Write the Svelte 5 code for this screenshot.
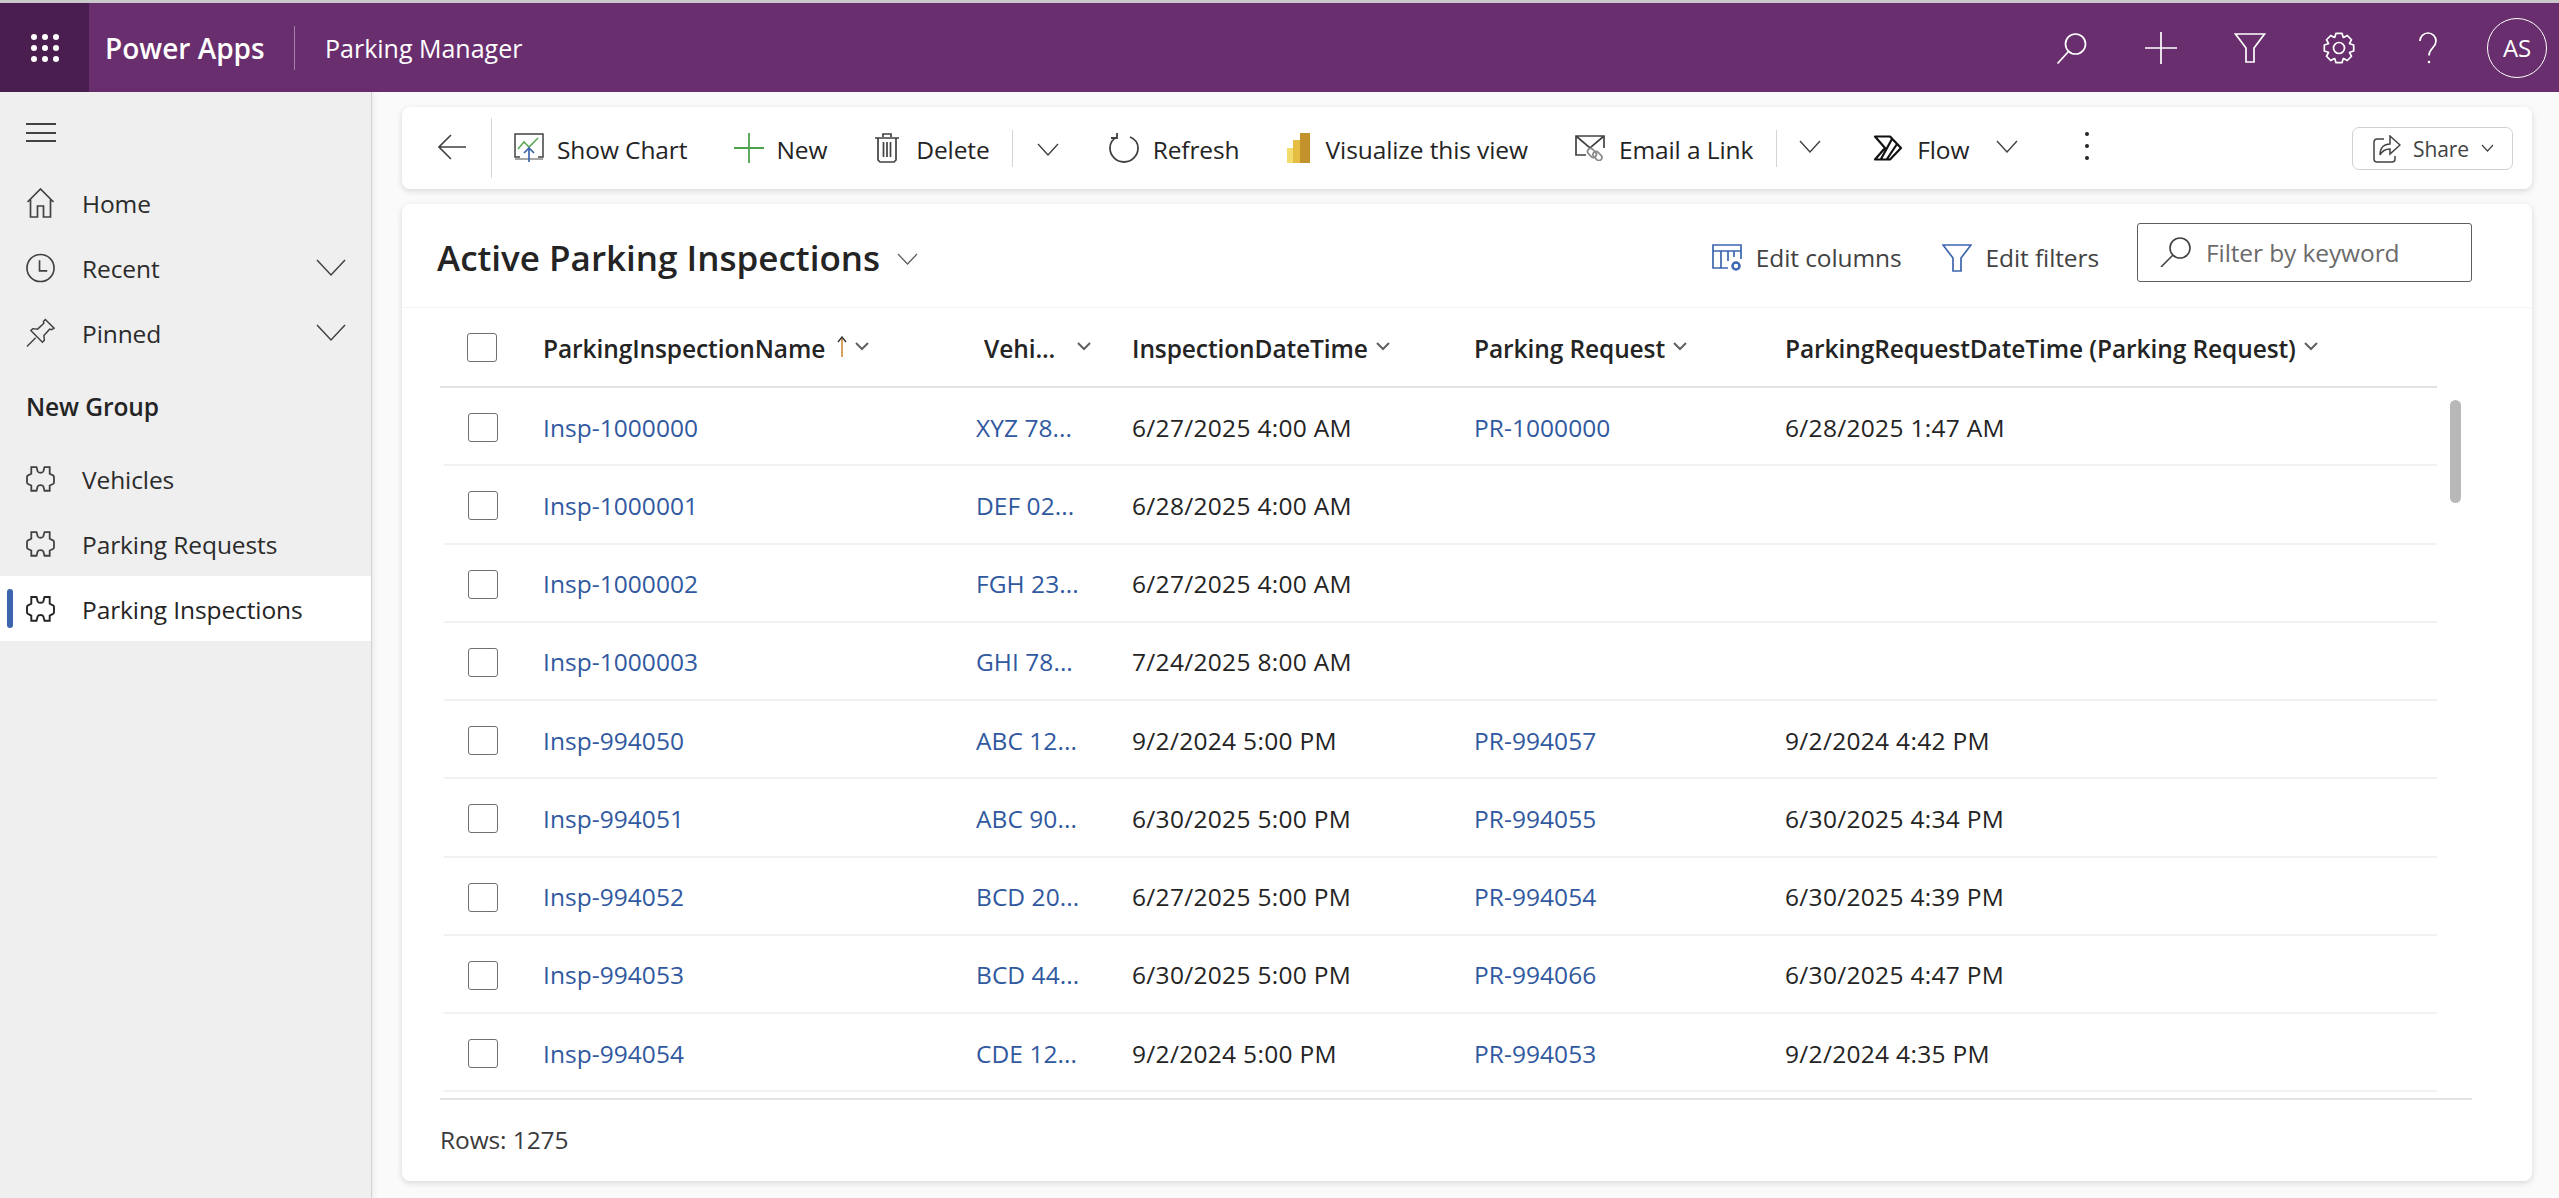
<script>
  const rows = [
    ['Insp-1000000','XYZ 78...','6/27/2025 4:00 AM','PR-1000000','6/28/2025 1:47 AM'],
    ['Insp-1000001','DEF 02...','6/28/2025 4:00 AM','',''],
    ['Insp-1000002','FGH 23...','6/27/2025 4:00 AM','',''],
    ['Insp-1000003','GHI 78...','7/24/2025 8:00 AM','',''],
    ['Insp-994050','ABC 12...','9/2/2024 5:00 PM','PR-994057','9/2/2024 4:42 PM'],
    ['Insp-994051','ABC 90...','6/30/2025 5:00 PM','PR-994055','6/30/2025 4:34 PM'],
    ['Insp-994052','BCD 20...','6/27/2025 5:00 PM','PR-994054','6/30/2025 4:39 PM'],
    ['Insp-994053','BCD 44...','6/30/2025 5:00 PM','PR-994066','6/30/2025 4:47 PM'],
    ['Insp-994054','CDE 12...','9/2/2024 5:00 PM','PR-994053','9/2/2024 4:35 PM']
  ];
  const puzzle = 'M5.300.8h5.200l1.200 4.500c.6 1.600 5 1.600 5.600 0l1.200-4.500h5.200v6.700l3.300 1.600c.6.3 1 1 1 1.700v5.200c0 .7-.4 1.400-1 1.700l-3.300 1.600v5.200H18.500l-1.200-4.500c-.6-1.600-5-1.600-5.600 0l-1.200 4.500H5.300v-5.200l-3.300-1.600c-.6-.3-1-1-1-1.700v-5.200c0-.7.4-1.400 1-1.700l3.300-1.600z';
  const gear = (() => {
    const pts = [];
    const n = 8, cx = 16, cy = 16, ro = 15, ri = 11.5;
    for (let i = 0; i < n; i++) {
      const a = (i * 2 * Math.PI) / n - Math.PI / 2;
      const step = (2 * Math.PI) / n;
      [[ri, -0.5], [ro, -0.27], [ro, 0.27], [ri, 0.5]].forEach(([r, f]) => {
        const t = a + f * step * 0.95;
        pts.push((cx + r * Math.cos(t)).toFixed(2) + ' ' + (cy + r * Math.sin(t)).toFixed(2));
      });
    }
    return 'M' + pts.join('L') + 'Z';
  })();
</script>

<div class="page">
  <div class="strip"></div>
  <header class="top">
    <div class="waffle">
      <svg width="30" height="30" viewBox="0 0 30 30" fill="#fff">
        {#each [4,15,26] as y}{#each [4,15,26] as x}<circle cx={x} cy={y} r="3"/>{/each}{/each}
      </svg>
    </div>
    <div class="brand">Power Apps</div>
    <div class="brand-sep"></div>
    <div class="appname">Parking Manager</div>
    <div class="top-icons">
      <svg class="ti" viewBox="0 0 32 32" fill="none" stroke="#fff" stroke-width="1.7"><circle cx="19.5" cy="12" r="10"/><path d="M12.5 19.5 1.5 31.5"/></svg>
      <svg class="ti" viewBox="0 0 32 32" fill="none" stroke="#fff" stroke-width="1.7"><path d="M16 0v32M0 16h32"/></svg>
      <svg class="ti" viewBox="0 0 32 32" fill="none" stroke="#fff" stroke-width="1.7"><path d="M1.5 2h29L20 16v14h-8V16z"/></svg>
      <svg class="ti" viewBox="0 0 32 32" fill="none" stroke="#fff" stroke-width="1.7"><circle cx="16" cy="16" r="5.500"/><path d={gear} stroke-linejoin="round"/></svg>
      <svg class="ti" viewBox="0 0 32 32" fill="none" stroke="#fff" stroke-width="1.7"><path d="M8 9c0-4.500 3.500-8 8-8s8 3.500 8 8c0 7-7 7-7 14.500"/><circle cx="17" cy="30" r="1.300" fill="#fff" stroke="none"/></svg>
      <div class="avatar">AS</div>
    </div>
  </header>

  <div class="body">
    <nav class="side">
      <div class="burger"><span></span><span></span><span></span></div>
      <div class="nav">
        <svg class="ni" viewBox="0 0 28 30" fill="none" stroke="#424242" stroke-width="1.7"><path d="M1 14 14 1l13 13M4 11v18h7V18h6v11h7V11"/></svg>
        <span>Home</span>
      </div>
      <div class="nav">
        <svg class="ni" viewBox="0 0 30 30" fill="none" stroke="#424242" stroke-width="1.7"><circle cx="15" cy="15" r="14"/><path d="M14 7v11h8"/></svg>
        <span>Recent</span>
        <svg class="chev" viewBox="0 0 30 18" fill="none" stroke="#424242" stroke-width="1.500"><path d="M1 1l14 15L29 1"/></svg>
      </div>
      <div class="nav">
        <svg class="ni" viewBox="0 0 30 30" fill="none" stroke="#424242" stroke-width="1.500"><path d="M20 1l9 9-2.500 1.500-2-.5-6 6.500.5 5-2 2-12-12 2-2 5 .5 6.500-6-.5-2zM10 20 1 29"/></svg>
        <span>Pinned</span>
        <svg class="chev" viewBox="0 0 30 18" fill="none" stroke="#424242" stroke-width="1.500"><path d="M1 1l14 15L29 1"/></svg>
      </div>
      <div class="group">New Group</div>
      <div class="nav">
        <svg class="ni" viewBox="0 0 29 25.500" fill="none" stroke="#424242" stroke-width="1.800"><path d={puzzle}/></svg>
        <span>Vehicles</span>
      </div>
      <div class="nav">
        <svg class="ni" viewBox="0 0 29 25.500" fill="none" stroke="#424242" stroke-width="1.800"><path d={puzzle}/></svg>
        <span>Parking Requests</span>
      </div>
      <div class="nav sel">
        <i class="bar"></i>
        <svg class="ni" viewBox="0 0 29 25.500" fill="none" stroke="#242424" stroke-width="1.900"><path d={puzzle}/></svg>
        <span>Parking Inspections</span>
      </div>
    </nav>

    <main class="main">
      <div class="card toolbar">
        <button class="tb back">
          <svg width="28" height="26" viewBox="0 0 28 26" fill="none" stroke="#424242" stroke-width="1.600"><path d="M13 1 1 13l12 12M1 13h27"/></svg>
        </button>
        <i class="vsep tall"></i>
        <button class="tb chart">
          <svg width="30" height="30" viewBox="0 0 30 30" fill="none">
            <path d="M6 24H1V1h28v23h-5" stroke="#424242" stroke-width="1.500"/>
            <path d="M1 26h28" stroke="#8a8a8a" stroke-width="1.500"/>
            <path d="M4 16l6-7 5 5 9-9" stroke="#5aa85a" stroke-width="1.600"/>
            <path d="M15 29V15M10 20l5-5 5 5" stroke="#3d65ae" stroke-width="1.700"/>
          </svg>
          <span>Show Chart</span>
        </button>
        <button class="tb new">
          <svg width="30" height="30" viewBox="0 0 30 30" fill="none" stroke="#4ea24e" stroke-width="1.800"><path d="M15 0v30M0 15h30"/></svg>
          <span>New</span>
        </button>
        <button class="tb del">
          <svg width="26" height="30" viewBox="0 0 26 30" fill="none" stroke="#424242" stroke-width="1.700"><path d="M1 5h24M9 4V1h8v3M4 5v22l2 2h14l2-2V5M9.500 9v15M13 9v15M16.500 9v15"/></svg>
          <span>Delete</span>
        </button>
        <i class="vsep s1"></i>
        <svg class="cv c1" viewBox="0 0 22 13" fill="none" stroke="#424242" stroke-width="1.400"><path d="M1 1l10 11L21 1"/></svg>
        <button class="tb refresh">
          <svg width="32" height="30" viewBox="0 0 32 30" fill="none" stroke="#424242" stroke-width="1.800"><path d="M22 4c5 2 8 6 8 11a14 14 0 1 1-28 0C2 10 5 6 9 4M9 0v5H3"/></svg>
          <span>Refresh</span>
        </button>
        <button class="tb viz">
          <svg width="23" height="30" viewBox="0 0 23 30">
            <rect x="0" y="15" width="10" height="15" fill="#f2dc6b"/>
            <rect x="6" y="7" width="10" height="23" fill="#e5bd42"/>
            <rect x="13" y="0" width="10" height="30" fill="#c4922c"/>
          </svg>
          <span>Visualize this view</span>
        </button>
        <button class="tb mail">
          <svg width="30" height="26" viewBox="0 0 30 26" fill="none">
            <path d="M11 20H1V1h28v12M1 1l14 12L29 1" stroke="#424242" stroke-width="1.700"/>
            <g stroke="#8a8a8a" stroke-width="1.700">
              <rect x="12" y="15" width="10" height="6" rx="3" transform="rotate(45 17 18)"/>
              <rect x="17.500" y="18" width="10" height="6" rx="3" transform="rotate(45 22.500 21)"/>
            </g>
          </svg>
          <span>Email a Link</span>
        </button>
        <i class="vsep s2"></i>
        <svg class="cv c2" viewBox="0 0 22 13" fill="none" stroke="#424242" stroke-width="1.400"><path d="M1 1l10 11L21 1"/></svg>
        <button class="tb flow">
          <svg width="30" height="26" viewBox="0 0 30 26" fill="none" stroke="#111" stroke-width="2.200" stroke-linejoin="round"><path d="M2 1.500h15l11 11.500-11 11.500H2l10-11.500zM19 4 8 24M24 9 14 24"/></svg>
          <span>Flow</span>
        </button>
        <svg class="cv c3" viewBox="0 0 22 13" fill="none" stroke="#424242" stroke-width="1.400"><path d="M1 1l10 11L21 1"/></svg>
        <div class="dots"><b></b><b></b><b></b></div>
        <button class="share">
          <svg width="28" height="28" viewBox="0 0 28 28" fill="none" stroke="#424242" stroke-width="1.500"><path d="M11 4H4a3 3 0 0 0-3 3v17a3 3 0 0 0 3 3h15a3 3 0 0 0 3-3v-3"/><path d="M17 1l10 9-10 9v-5c-5 0-8 2-10 6 0-7 4-11 10-11z"/></svg>
          <span>Share</span>
          <svg width="13" height="9" viewBox="0 0 13 9" fill="none" stroke="#424242" stroke-width="1.200"><path d="M1 1l5.500 6L12 1"/></svg>
        </button>
      </div>

      <div class="card grid">
        <div class="titlebar">
          <h1>Active Parking Inspections</h1>
          <svg class="tchev" viewBox="0 0 21 12" fill="none" stroke="#616161" stroke-width="1.300"><path d="M1 1l9.500 10L20 1"/></svg>
          <div class="tools">
            <button class="tool">
              <svg width="30" height="28" viewBox="0 0 30 28" fill="none" stroke="#3d65ae" stroke-width="1.700"><path d="M16 24H1V1h28v14M1 7h28M9 7v17M16 7v10M22 7v6"/><circle cx="24" cy="22" r="3.500" stroke-width="2.500"/></svg>
              <span>Edit columns</span>
            </button>
            <button class="tool">
              <svg width="30" height="28" viewBox="0 0 30 28" fill="none" stroke="#3d65ae" stroke-width="1.700"><path d="M1 1h28L19 14v13h-8V14z"/></svg>
              <span>Edit filters</span>
            </button>
            <div class="search">
              <svg width="32" height="30" viewBox="0 0 32 30" fill="none" stroke="#424242" stroke-width="1.600"><circle cx="20" cy="11" r="10"/><path d="M13 18 1 30"/></svg>
              <span>Filter by keyword</span>
            </div>
          </div>
        </div>

        <div class="table">
          <div class="thead">
            <i class="cb"></i>
            <div class="th c-name">ParkingInspectionName
              <svg class="up" width="10" height="22" viewBox="0 0 10 22" fill="none" stroke-width="1.400"><path d="M5 1v20" stroke="#c87a1e"/><path d="M1 6l4-5 4 5" stroke="#333"/></svg>
              <svg class="hc" viewBox="0 0 14 9" fill="none" stroke="#616161" stroke-width="2"><path d="M1 1l6 6 6-6"/></svg>
            </div>
            <div class="th c-veh">Vehi...
              <svg class="hc far" viewBox="0 0 14 9" fill="none" stroke="#616161" stroke-width="2"><path d="M1 1l6 6 6-6"/></svg>
            </div>
            <div class="th c-date">InspectionDateTime
              <svg class="hc" viewBox="0 0 14 9" fill="none" stroke="#616161" stroke-width="2"><path d="M1 1l6 6 6-6"/></svg>
            </div>
            <div class="th c-pr">Parking Request
              <svg class="hc" viewBox="0 0 14 9" fill="none" stroke="#616161" stroke-width="2"><path d="M1 1l6 6 6-6"/></svg>
            </div>
            <div class="th c-prd">ParkingRequestDateTime (Parking Request)
              <svg class="hc" viewBox="0 0 14 9" fill="none" stroke="#616161" stroke-width="2"><path d="M1 1l6 6 6-6"/></svg>
            </div>
          </div>
          {#each rows as r}
            <div class="row">
              <i class="cb"></i>
              <a class="td c-name">{r[0]}</a>
              <a class="td c-veh">{r[1]}</a>
              <div class="td c-date">{r[2]}</div>
              <a class="td c-pr">{r[3]}</a>
              <div class="td c-prd">{r[4]}</div>
            </div>
          {/each}
          <div class="thumb"></div>
        </div>

        <div class="foot">Rows: 1275</div>
      </div>
    </main>
  </div>
</div>

<style>
  :global(body) { margin: 0; background: #fafafa; }
  .page {
    width: 2559px; height: 1198px; overflow: hidden; display: flex; flex-direction: column;
    font-family: "Open Sans", "Noto Sans", sans-serif; font-size: 24.500px; letter-spacing: -0.1px; color: #242424;
  }
  button { all: unset; box-sizing: border-box; display: flex; align-items: center; font: inherit; letter-spacing: inherit; white-space: nowrap; }
  .strip { height: 3px; background: #c9c9c9; }
  .top { height: 89px; background: #692e6e; display: flex; align-items: center; color: #fff; }
  .waffle { width: 89px; height: 89px; background: #4a1f4f; display: flex; align-items: center; justify-content: center; }
  .brand { margin-left: 16px; font-size: 28px; font-weight: 600; letter-spacing: 0; width: 159px; white-space: nowrap; }
  .brand-sep { width: 1px; height: 44px; background: #a583a8; margin: 0 30px 0 30px; }
  .appname { font-size: 25px; letter-spacing: 0; white-space: nowrap; }
  .top-icons { margin-left: auto; display: flex; align-items: center; gap: 57px; padding-right: 12px; }
  .ti { width: 32px; height: 32px; }
  .avatar { width: 60px; height: 60px; margin-left: -14px; box-sizing: border-box; border: 1.300px solid #fff; border-radius: 50%; display: flex; align-items: center; justify-content: center; font-size: 24px; }

  .body { flex: 1; display: flex; min-height: 0; }
  .side { width: 371px; background: #efefef; border-right: 1px solid #d2d2d2; box-shadow: 2px 0 6px rgba(0,0,0,.07); flex: none; }
  .burger { height: 78px; padding: 31px 0 0 26px; box-sizing: border-box; display: flex; flex-direction: column; gap: 6.500px; }
  .burger span { display: block; width: 30px; height: 2px; background: #424242; }
  .nav { position: relative; height: 65px; display: flex; align-items: center; padding-left: 26px; color: #2b2b2b; }
  .nav span { margin: 1px 0 0 27px; }
  .ni { width: 29px; height: 30px; flex: none; }
  .chev { width: 30px; height: 18px; position: absolute; left: 316px; top: 24px; }
  .group { height: 81px; box-sizing: border-box; padding: 1px 0 0 26px; display: flex; align-items: center; font-weight: 600; }
  .nav.sel { background: #fff; color: #242424; }
  .bar { position: absolute; left: 7px; top: 13px; width: 6px; height: 39px; background: #3d65ae; border-radius: 3px; }

  .main { flex: 1; padding: 15px 27px 17px 30px; display: flex; flex-direction: column; gap: 15px; min-width: 0; }
  .card { background: #fff; border-radius: 8px; box-shadow: 0 2px 6px rgba(0,0,0,.14); }
  .toolbar { height: 82px; display: flex; align-items: center; flex: none; position: relative; }
  .tb { gap: 13px; }
  .tb span { position: relative; top: 1px; }
  .back { margin: -3px 0 0 36px; }
  .vsep { width: 1px; background: #d4d4d4; flex: none; }
  .vsep.tall { height: 60px; margin-left: 25px; }
  .chart { margin-left: 22px; }
  .new { margin-left: 47px; gap: 12px; }
  .del { margin-left: 47px; gap: 16px; }
  .vsep.s1 { height: 37px; margin-left: 22px; }
  .cv { width: 22px; height: 13px; flex: none; }
  .c1 { margin-left: 24px; margin-top: 2px; }
  .refresh { margin-left: 49px; gap: 13px; }
  .viz { margin-left: 47px; gap: 16px; }
  .mail { margin-left: 47px; gap: 14px; }
  .vsep.s2 { height: 37px; margin-left: 23px; }
  .c2 { margin-left: 22px; margin-top: -4px; }
  .flow { margin-left: 52px; gap: 14px; }
  .c3 { margin-left: 27px; margin-top: -4px; }
  .dots { margin-left: 67px; margin-top: -4px; display: flex; flex-direction: column; gap: 8px; }
  .dots b { display: block; width: 4px; height: 4px; border-radius: 50%; background: #242424; }
  .share { position: absolute; right: 19px; top: 20px; height: 43px; width: 161px; border: 1px solid #d1d1d1; border-radius: 7px; padding-left: 20px; gap: 12px; font-size: 21px; color: #424242; }

  .grid { flex: 1; display: flex; flex-direction: column; min-height: 0; }
  .titlebar { height: 104px; box-sizing: border-box; padding-top: 4px; flex: none; border-bottom: 1px solid #f5f5f5; display: flex; align-items: center; padding-left: 35px; position: relative; }
  h1 { margin: 0; font-size: 35px; font-weight: 600; letter-spacing: 0; white-space: nowrap; }
  .tchev { width: 21px; height: 12px; margin-left: 17px; margin-top: 2px; }
  .tools { margin-left: auto; display: flex; align-items: center; margin-right: 60px; }
  .tool { gap: 14px; color: #424242; margin-right: 40px; }
  .search { width: 335px; height: 59px; box-sizing: border-box; border: 1.500px solid #605e5c; border-radius: 3px; display: flex; align-items: center; padding-left: 22px; gap: 14px; color: #6b6b6b; margin: -11px 0 0 -2px; }

  .table { position: relative; flex: 1; min-height: 0; }
  .thead { height: 78px; margin-left: 38px; margin-right: 95px; border-bottom: 2px solid #e3e3e3; display: flex; align-items: center; position: relative; }
  .cb { display: block; position: absolute; width: 30px; height: 29px; box-sizing: border-box; border: 1.300px solid #707070; border-radius: 3px; background: #fff; }
  .thead .cb { left: 27px; top: 25px; }
  .th { position: absolute; top: 24px; font-weight: 600; white-space: nowrap; display: flex; align-items: center; gap: 8px; }
  .thead .c-name { left: 103px; }
  .thead .c-veh { left: 544px; }
  .thead .c-date { left: 692px; }
  .thead .c-pr { left: 1034px; }
  .thead .c-prd { left: 1345px; }
  .up { margin: -4px 0 0 4px; }
  .hc { width: 14px; height: 9px; margin-top: -4px; }
  .hc.far { margin-left: 14px; }
  .row { height: 78.250px; margin-left: 42px; margin-right: 95px; border-bottom: 2px solid #f1f1f1; box-sizing: border-box; position: relative; }
  .row .cb { left: 24px; top: 25px; }
  .td { position: absolute; white-space: nowrap; top: 22.500px; letter-spacing: 0.05px; }
  a.td { color: #31599f; }
  .row .c-name { left: 99px; }
  .row .c-veh { left: 532px; }
  .row .c-date { left: 688px; letter-spacing: .3px; }
  .row .c-pr { left: 1030px; }
  .row .c-prd { left: 1341px; letter-spacing: .3px; }
  .thumb { position: absolute; left: 2048px; top: 92px; width: 11px; height: 103px; border-radius: 6px; background: #b8b8b8; }
  .foot { flex: none; height: 83px; box-sizing: border-box; padding-bottom: 3px; margin: 0 60px 0 38px; border-top: 2px solid #e3e3e3; display: flex; align-items: center; color: #3b3b3b; }
</style>
